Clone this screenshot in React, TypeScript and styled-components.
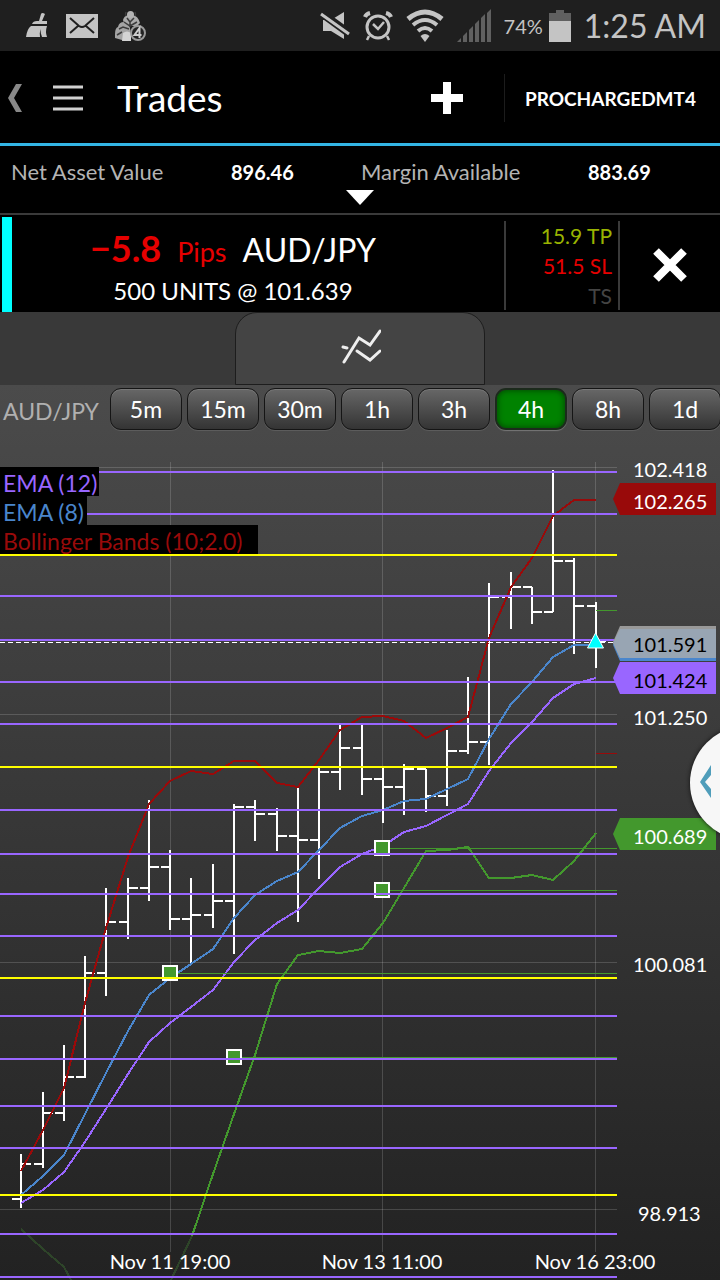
import React from "react";
import styled, { createGlobalStyle } from "styled-components";

const GlobalStyle = createGlobalStyle`
  *, *::before, *::after { box-sizing: border-box; }
  body { margin: 0; background: #222; }
  button { font: inherit; color: inherit; border: 0; padding: 0; background: none; cursor: pointer; }
`;

const Screen = styled.main`
  font-family: Lato, "Open Sans", sans-serif;
  color: #fff;
  background: #000;
  overflow: hidden;
`;

const StatusBar = styled.div`
  display: flex;
  align-items: center;
  justify-content: space-between;
  height: 51px;
  padding: 0 14px 0 25px;
  background: #1f1f1f;
  color: #c4c4c4;
`;

const StatusGroup = styled.div<{ $gap: number }>`
  display: flex;
  align-items: center;
  gap: ${(p) => p.$gap}px;
`;

const Battery = styled.span`
  font-size: 20px;
  margin-right: -7px;
`;

const Clock = styled.time`
  font-size: 32px;
  line-height: 40px;
`;

const Header = styled.header`
  display: flex;
  align-items: center;
  height: 95px;
  padding-top: 2px;
  border-bottom: 3px solid #33b5e5;
`;

const IconButton = styled.button<{ $width: number }>`
  display: flex;
  align-items: center;
  justify-content: center;
  width: ${(p) => p.$width}px;
  height: 60px;
`;

const Title = styled.h1`
  flex: 1;
  margin: 0 0 0 11px;
  font-size: 37px;
  font-weight: 400;
  line-height: 40px;
`;

const Account = styled.button`
  height: 48px;
  margin-left: 27px;
  padding: 0 24px 0 20px;
  border-left: 1px solid #1c1c1c;
  font-size: 19px;
  font-weight: 700;
`;

const Summary = styled.dl`
  position: relative;
  display: grid;
  grid-template-columns: 220fr 130fr 227fr 132fr;
  height: 69px;
  margin: 0;
  padding: 13px 0 0 11px;
  border-bottom: 2px solid #3a3a3a;
  font-size: 22px;
  line-height: 26px;
`;

const SummaryLabel = styled.dt`
  color: #b4b4b4;
`;

const SummaryValue = styled.dd`
  margin: 0;
  font-size: 20px;
  font-weight: 700;
`;

const SummaryBox = styled.div`
  position: relative;
`;

const Expand = styled.button`
  position: absolute;
  left: 50%;
  bottom: 9px;
  display: flex;
  margin-left: -14px;
`;

const Trade = styled.section`
  display: flex;
  align-items: stretch;
  height: 97px;
  padding: 2px 0 0 2px;
`;

const Side = styled.div`
  width: 10px;
  background: #0ff;
`;

const TradeInfo = styled.div`
  flex: 1;
  display: flex;
  flex-direction: column;
  align-items: center;
  padding: 8px 50px 0 0;
`;

const TradeHead = styled.div`
  display: flex;
  align-items: baseline;
  gap: 16px;
  font-size: 32px;
  line-height: 46px;
`;

const Pips = styled.strong`
  color: #e60000;
  font-size: 36px;
`;

const PipsUnit = styled.span`
  color: #e60000;
  font-size: 27px;
`;

const TradeSize = styled.div`
  font-size: 24px;
  line-height: 32px;
`;

const Limits = styled.div`
  width: 116px;
  margin: 4px 0 2px;
  padding: 0 6px 0 0;
  border: solid #3a3a3a;
  border-width: 0 2px;
  text-align: right;
  font-size: 21px;
  line-height: 30px;
`;

const Limit = styled.div<{ $color: string }>`
  color: ${(p) => p.$color};
`;

const CloseButton = styled(IconButton)`
  height: auto;
`;

const TabStrip = styled.div`
  display: flex;
  justify-content: center;
  height: 73px;
  background: #393939;
`;

const ChartTab = styled.button`
  width: 250px;
  height: 73px;
  border: 1px solid #1d1d1d;
  border-radius: 22px 22px 0 0;
  background: #444;
`;

const ChartPanel = styled.section`
  position: relative;
  background: linear-gradient(#4b4b4b, #222);
`;

const Intervals = styled.div`
  display: flex;
  gap: 5px;
  height: 53px;
  padding: 3px 0 0 3px;
`;

const Pair = styled.span`
  flex: 0 0 102px;
  color: #b0b0b0;
  font-size: 23px;
  line-height: 46px;
  white-space: nowrap;
`;

const Interval = styled.button<{ $active: boolean }>`
  flex: 0 0 72px;
  height: 42px;
  border: ${(p) => (p.$active ? "2px solid #1c2a1c" : "1px solid #151515")};
  border-radius: 11px;
  background: ${(p) => (p.$active ? "#008200" : "linear-gradient(#676767, #343434)")};
  box-shadow: ${(p) =>
    p.$active ? "inset 0 0 6px #033c03, 0 1px 1px #777" : "0 1px 0 #5c5c5c, inset 0 1px 0 #777"};
  font-size: 23px;
`;

const ChartArea = styled.div`
  position: relative;
`;

const Plot = styled.svg`
  display: block;
  width: 100%;
  height: auto;
  font-size: 20px;
`;

const Legend = styled.ul`
  position: absolute;
  top: 29px;
  left: 0;
  margin: 0;
  padding: 0;
  list-style: none;
  font-size: 23px;
  line-height: 32px;
`;

const LegendItem = styled.li<{ $color: string; $width: number }>`
  width: ${(p) => p.$width}px;
  height: 29px;
  padding-left: 3px;
  background: #000;
  color: ${(p) => p.$color};
  white-space: nowrap;
`;

const Drawer = styled.button`
  position: absolute;
  top: 288px;
  right: -84px;
  width: 114px;
  height: 114px;
  padding-left: 10px;
  border-radius: 50%;
  background: #f7f7f7;
  box-shadow: 0 0 4px #111;
  text-align: left;
`;

const PURPLE = "#9966ff";
const BLUE = "#4a86cc";
const RED = "#990a0a";
const GREEN = "#43982d";

/* x, high, low, close of each bar; a bar opens at the close before it */
const bars = [
  [21, 1154, 1208, 1164], [43, 1092, 1168, 1113], [64, 1045, 1121, 1077], [85, 956, 1078, 973],
  [106, 888, 996, 922], [128, 878, 939, 888], [149, 800, 901, 867], [170, 850, 930, 919],
  [191, 878, 963, 915], [213, 864, 928, 901], [234, 804, 954, 807], [255, 800, 841, 814],
  [277, 808, 851, 836], [298, 788, 922, 840], [319, 767, 879, 772], [340, 725, 790, 748],
  [362, 725, 795, 779], [383, 767, 823, 787], [404, 764, 815, 769], [426, 769, 812, 796],
  [447, 730, 806, 751], [468, 677, 754, 742], [489, 583, 765, 597], [511, 572, 629, 587],
  [532, 587, 624, 612], [553, 470, 612, 561], [574, 558, 654, 606], [596, 602, 668, 641],
];

const barPath = bars
  .map(([x, high, low, close], i) => {
    const open = i === 0 ? 1199 : bars[i - 1][3];
    return `M${x} ${high}V${low}M${x - 9} ${open}H${x}M${x} ${close}H${x + 10}`;
  })
  .join("");

const upper = [
  1171, 1130, 1088, 1003, 928, 857, 804, 781, 771, 774, 761, 761, 783, 787, 760, 730, 717, 716, 721,
  738, 728, 717, 638, 587, 558, 516, 500, 500,
];
const ema8 = [
  1195, 1176, 1155, 1114, 1073, 1031, 995, 978, 964, 949, 918, 895, 881, 872, 850, 828, 816, 810, 801,
  799, 789, 779, 739, 704, 682, 657, 645, 645,
];
const ema12 = [
  1203, 1190, 1172, 1142, 1109, 1074, 1042, 1023, 1007, 990, 962, 940, 923, 910, 888, 867, 854, 846,
  832, 826, 815, 804, 771, 743, 722, 698, 684, 678,
];
const lower = [
  1174, 1114, 1055, 984, 955, 951, 953, 949, 923, 888, 851, 850, 847, 878, 878, 875, 880, 861, 833,
];

const curve = (ys: number[], from = 0) => ys.map((y, i) => `${bars[i + from][0]},${y}`).join(" ");

const purpleLevels = [472, 514, 596, 640, 682, 724, 810, 854, 894, 936, 1016, 1059, 1106, 1148, 1234, 1277];
const yellowLevels = [555, 767, 978, 1195];

const orders = [
  { x: 382, y: 848 },
  { x: 382, y: 890 },
  { x: 170, y: 973 },
  { x: 234, y: 1057 },
];

const axis = [
  { label: "102.418", grid: 467, y: 477, x: 633 },
  { label: "101.250", grid: 714, y: 725, x: 633 },
  { label: "100.081", grid: 962, y: 972, x: 633 },
  { label: "98.913", grid: 1209, y: 1221, x: 638 },
];

const dates = [
  { label: "Nov 11 19:00", x: 170 },
  { label: "Nov 13 11:00", x: 382 },
  { label: "Nov 16 23:00", x: 595 },
];

const legend = [
  { label: "EMA (12)", color: PURPLE, width: 99 },
  { label: "EMA (8)", color: BLUE, width: 87 },
  { label: "Bollinger Bands (10;2.0)", color: RED, width: 258 },
];

const intervals = ["5m", "15m", "30m", "1h", "3h", "4h", "8h", "1d"];

function Tag({ y, fill, label, color }: { y: number; fill: string; label?: string; color?: string }) {
  return (
    <g>
      <path d={`M613 ${y + 16}L620 ${y}H716V${y + 32}H620Z`} fill={fill} />
      {label && (
        <text x="633" y={y + 26} fill={color}>
          {label}
        </text>
      )}
    </g>
  );
}

function PriceChart() {
  return (
    <Plot viewBox="0 438 720 842" role="img" aria-label="AUD/JPY 4 hour price chart">
      <g stroke="#fff" strokeOpacity="0.16">
        {axis.map((a) => (
          <path key={a.label} d={`M0 ${a.grid + 0.5}H617`} />
        ))}
        {dates.map((d) => (
          <path key={d.label} d={`M${d.x + 0.5} 462V1252`} />
        ))}
      </g>

      <path d={barPath} stroke="#fff" strokeWidth="2" fill="none" shapeRendering="crispEdges" />

      <g fill="none" strokeWidth="2" strokeLinejoin="round" shapeRendering="crispEdges">
        <polyline points="21,1229 43,1249 64,1267 71,1280" stroke="#2e4529" />
        <polyline points="171,1280 192,1236" stroke="#2e4529" />
        <polyline points={`192,1236 ${curve(lower, 9)}`} stroke={GREEN} />
        <polyline points={curve(upper)} stroke={RED} />
        <polyline points={curve(ema8)} stroke={BLUE} />
        <polyline points={curve(ema12)} stroke={PURPLE} />
      </g>

      <g stroke={GREEN}>
        <path d="M596 610.5H617" />
        {orders.map((o) => (
          <g key={`${o.x}-${o.y}`}>
            <path d={`M${o.x} ${o.y + 0.5}H617`} />
            <rect x={o.x - 7} y={o.y - 7} width="14" height="14" fill={GREEN} stroke="#fff" strokeWidth="2" />
          </g>
        ))}
      </g>
      <path d="M596 753.5H617" stroke={RED} />

      <g strokeWidth="2" shapeRendering="crispEdges">
        {purpleLevels.map((y) => (
          <path key={y} d={`M0 ${y}H617`} stroke={PURPLE} />
        ))}
        {yellowLevels.map((y) => (
          <path key={y} d={`M0 ${y}H617`} stroke="#ff0" />
        ))}
      </g>
      <path d="M0 642.5H617" stroke="#fff" strokeDasharray="5 3" />
      <path d="M595.5 633L603.5 648H587.5Z" fill="#0ff" stroke="#fff" />

      {axis.map((a) => (
        <text key={a.label} x={a.x} y={a.y} fill="#fff">
          {a.label}
        </text>
      ))}
      {dates.map((d) => (
        <text key={d.label} x={d.x} y="1269" fill="#fff" textAnchor="middle">
          {d.label}
        </text>
      ))}

      <Tag y={483} fill={RED} label="102.265" color="#fff" />
      <Tag y={629} fill={BLUE} />
      <Tag y={626} fill="#999" />
      <path d="M613 643L620 629H716V658H620Z" fill="#98a5b3" />
      <text x="633" y="652">
        101.591
      </text>
      <Tag y={662} fill={PURPLE} label="101.424" color="#000" />
      <Tag y={818} fill={GREEN} label="100.689" color="#fff" />
    </Plot>
  );
}

function BroomIcon() {
  return (
    <svg width="24" height="26" viewBox="0 0 24 26" fill="currentColor" aria-hidden="true">
      <path d="M16 1q1-2 4 0l-3 7h5v3H7q1-3 5-3h2z" />
      <path d="M6 13h16q-2 6 0 11h-5q-2-4-1-8-2 4-1 8H1Q2 16 6 13z" />
    </svg>
  );
}

function MailIcon() {
  return (
    <svg width="32" height="24" viewBox="0 0 32 24" aria-hidden="true">
      <path d="M0 0h32v24H0z" fill="currentColor" />
      <path d="M4 4l9 8q3 2 6 0l9-8M4 19l8-7M28 19l-8-7" stroke="#1f1f1f" strokeWidth="2" fill="none" />
    </svg>
  );
}

function GroupIcon() {
  return (
    <svg width="31" height="32" viewBox="0 0 31 32" aria-hidden="true">
      <path d="M8 10q1-4 5-5h5q5 1 7 8l-3 3H10z" fill="#aaa" />
      <path d="M0 24q0-6 3-7 1-5 6-5 5 1 6 6l1 12H7l-7-2z" fill="#a4a4a4" />
      <path d="M8 23q4-3 8 0v8H7z" fill="#d4d4d4" />
      <circle cx="15.500" cy="4.500" r="3.500" fill="#b4b4b4" />
      <path
        d="M12 8l3 4 4-4M9 12l6 4 7-4M4 19l4-2 6 2M2 25l5-3M15 12v5M11 6q-1-2 0-4M20 6q1-2 0-4"
        stroke="#3c3c3c"
        strokeWidth="1.500"
        fill="none"
      />
      <circle cx="23" cy="23" r="7" fill="#222" stroke="#999" strokeWidth="2" />
      <path d="M24.500 28V18l-5 7h7" stroke="#ccc" strokeWidth="2" fill="none" />
    </svg>
  );
}

function MuteIcon() {
  return (
    <svg width="30" height="29" viewBox="0 0 30 29" aria-hidden="true">
      <path d="M3 9h8L24 1v27l-13-8H3z" fill="currentColor" />
      <path d="M0 1l30 22" stroke="#1f1f1f" strokeWidth="8" />
      <path d="M1 3l28 20" stroke="currentColor" strokeWidth="3" />
    </svg>
  );
}

function AlarmIcon() {
  return (
    <svg width="30" height="30" viewBox="0 0 30 30" fill="none" stroke="currentColor" aria-hidden="true">
      <circle cx="15" cy="16" r="11" strokeWidth="3" />
      <path d="M10 13l5 5 6-7M6 25l-2 4M24 25l2 4" strokeWidth="2.500" />
      <path d="M2 6q1-3 5-4M23 2q4 1 5 4" strokeWidth="4" />
    </svg>
  );
}

function WifiIcon() {
  return (
    <svg width="38" height="34" viewBox="0 0 38 34" fill="none" stroke="currentColor" aria-hidden="true">
      <path d="M2 10q17-14 34 0" strokeWidth="5" />
      <path d="M7 16q12-10 24 0M12 22q7-6 14 0" strokeWidth="4" />
      <path d="M14.500 27q4.500-4 9 0L19 33z" fill="currentColor" stroke="none" />
    </svg>
  );
}

function SignalIcon() {
  return (
    <svg width="34" height="33" viewBox="0 0 34 33" fill="#606060" aria-hidden="true">
      <path d="M0 33l4-4v4zM6 33v-6l4-4v10zM12 33V21l4-4v16zM18 33V15l4-4v22zM24 33V9l4-4v28zM30 33V4l4-4v33z" />
    </svg>
  );
}

function BatteryIcon() {
  return (
    <svg width="22" height="32" viewBox="0 0 22 32" aria-hidden="true">
      <path d="M7 0h8v3h7v10H0V3h7z" fill="#606060" />
      <path d="M0 11h22v21H0z" fill="currentColor" />
    </svg>
  );
}

export default function App() {
  return (
    <Screen>
      <GlobalStyle />
      <StatusBar>
        <StatusGroup $gap={17}>
          <BroomIcon />
          <MailIcon />
          <GroupIcon />
        </StatusGroup>
        <StatusGroup $gap={13}>
          <MuteIcon />
          <AlarmIcon />
          <WifiIcon />
          <SignalIcon />
          <Battery>74%</Battery>
          <BatteryIcon />
          <Clock>1:25 AM</Clock>
        </StatusGroup>
      </StatusBar>

      <Header>
        <IconButton $width={30} aria-label="Back">
          <svg width="14" height="28" viewBox="0 0 14 28" fill="#888">
            <path d="M8 0h6L6 14l8 14H8L0 14z" />
          </svg>
        </IconButton>
        <IconButton $width={76} aria-label="Menu">
          <svg width="30" height="26" viewBox="0 0 30 26" stroke="#d0d0d0" strokeWidth="3">
            <path d="M0 2h30M0 13h30M0 24h30" />
          </svg>
        </IconButton>
        <Title>Trades</Title>
        <IconButton $width={60} aria-label="New trade">
          <svg width="32" height="32" viewBox="0 0 32 32" stroke="#fff" strokeWidth="8">
            <path d="M16 0v32M0 16h32" />
          </svg>
        </IconButton>
        <Account>PROCHARGEDMT4</Account>
      </Header>

      <SummaryBox>
        <Summary>
          <SummaryLabel>Net Asset Value</SummaryLabel>
          <SummaryValue>896.46</SummaryValue>
          <SummaryLabel>Margin Available</SummaryLabel>
          <SummaryValue>883.69</SummaryValue>
        </Summary>
        <Expand aria-label="Show more">
          <svg width="28" height="16" viewBox="0 0 28 16" fill="#fff" aria-hidden="true">
            <path d="M0 0h28L14 15z" />
          </svg>
        </Expand>
      </SummaryBox>

      <Trade>
        <Side />
        <TradeInfo>
          <TradeHead>
            <Pips>−5.8</Pips>
            <PipsUnit>Pips</PipsUnit>
            <span>AUD/JPY</span>
          </TradeHead>
          <TradeSize>500 UNITS @ 101.639</TradeSize>
        </TradeInfo>
        <Limits>
          <Limit $color="#99b300">15.9 TP</Limit>
          <Limit $color="#e60000">51.5 SL</Limit>
          <Limit $color="#444">TS</Limit>
        </Limits>
        <CloseButton $width={100} aria-label="Close trade">
          <svg width="34" height="34" viewBox="0 0 34 34" stroke="#fff" strokeWidth="8" strokeLinejoin="round">
            <path d="M3 3l28 28M31 3L3 31" />
          </svg>
        </CloseButton>
      </Trade>

      <TabStrip>
        <ChartTab aria-label="Chart">
          <svg width="42" height="36" viewBox="0 0 42 36" fill="none" stroke="#eee" strokeWidth="3" strokeLinecap="round">
            <path d="M5 33L20 9l11 7L41 2M4 18l4 1M18 22l13 9 10-9" />
          </svg>
        </ChartTab>
      </TabStrip>

      <ChartPanel>
        <Intervals>
          <Pair>AUD/JPY</Pair>
          {intervals.map((name) => (
            <Interval key={name} $active={name === "4h"} aria-pressed={name === "4h"}>
              {name}
            </Interval>
          ))}
        </Intervals>
        <ChartArea>
          <PriceChart />
          <Legend>
            {legend.map((item) => (
              <LegendItem key={item.label} $color={item.color} $width={item.width}>
                {item.label}
              </LegendItem>
            ))}
          </Legend>
          <Drawer aria-label="Open drawer">
            <svg width="12" height="34" viewBox="0 0 12 34" fill="#4f9dba">
              <path d="M11 0v10L5 17l6 7v9L0 17z" />
            </svg>
          </Drawer>
        </ChartArea>
      </ChartPanel>
    </Screen>
  );
}
